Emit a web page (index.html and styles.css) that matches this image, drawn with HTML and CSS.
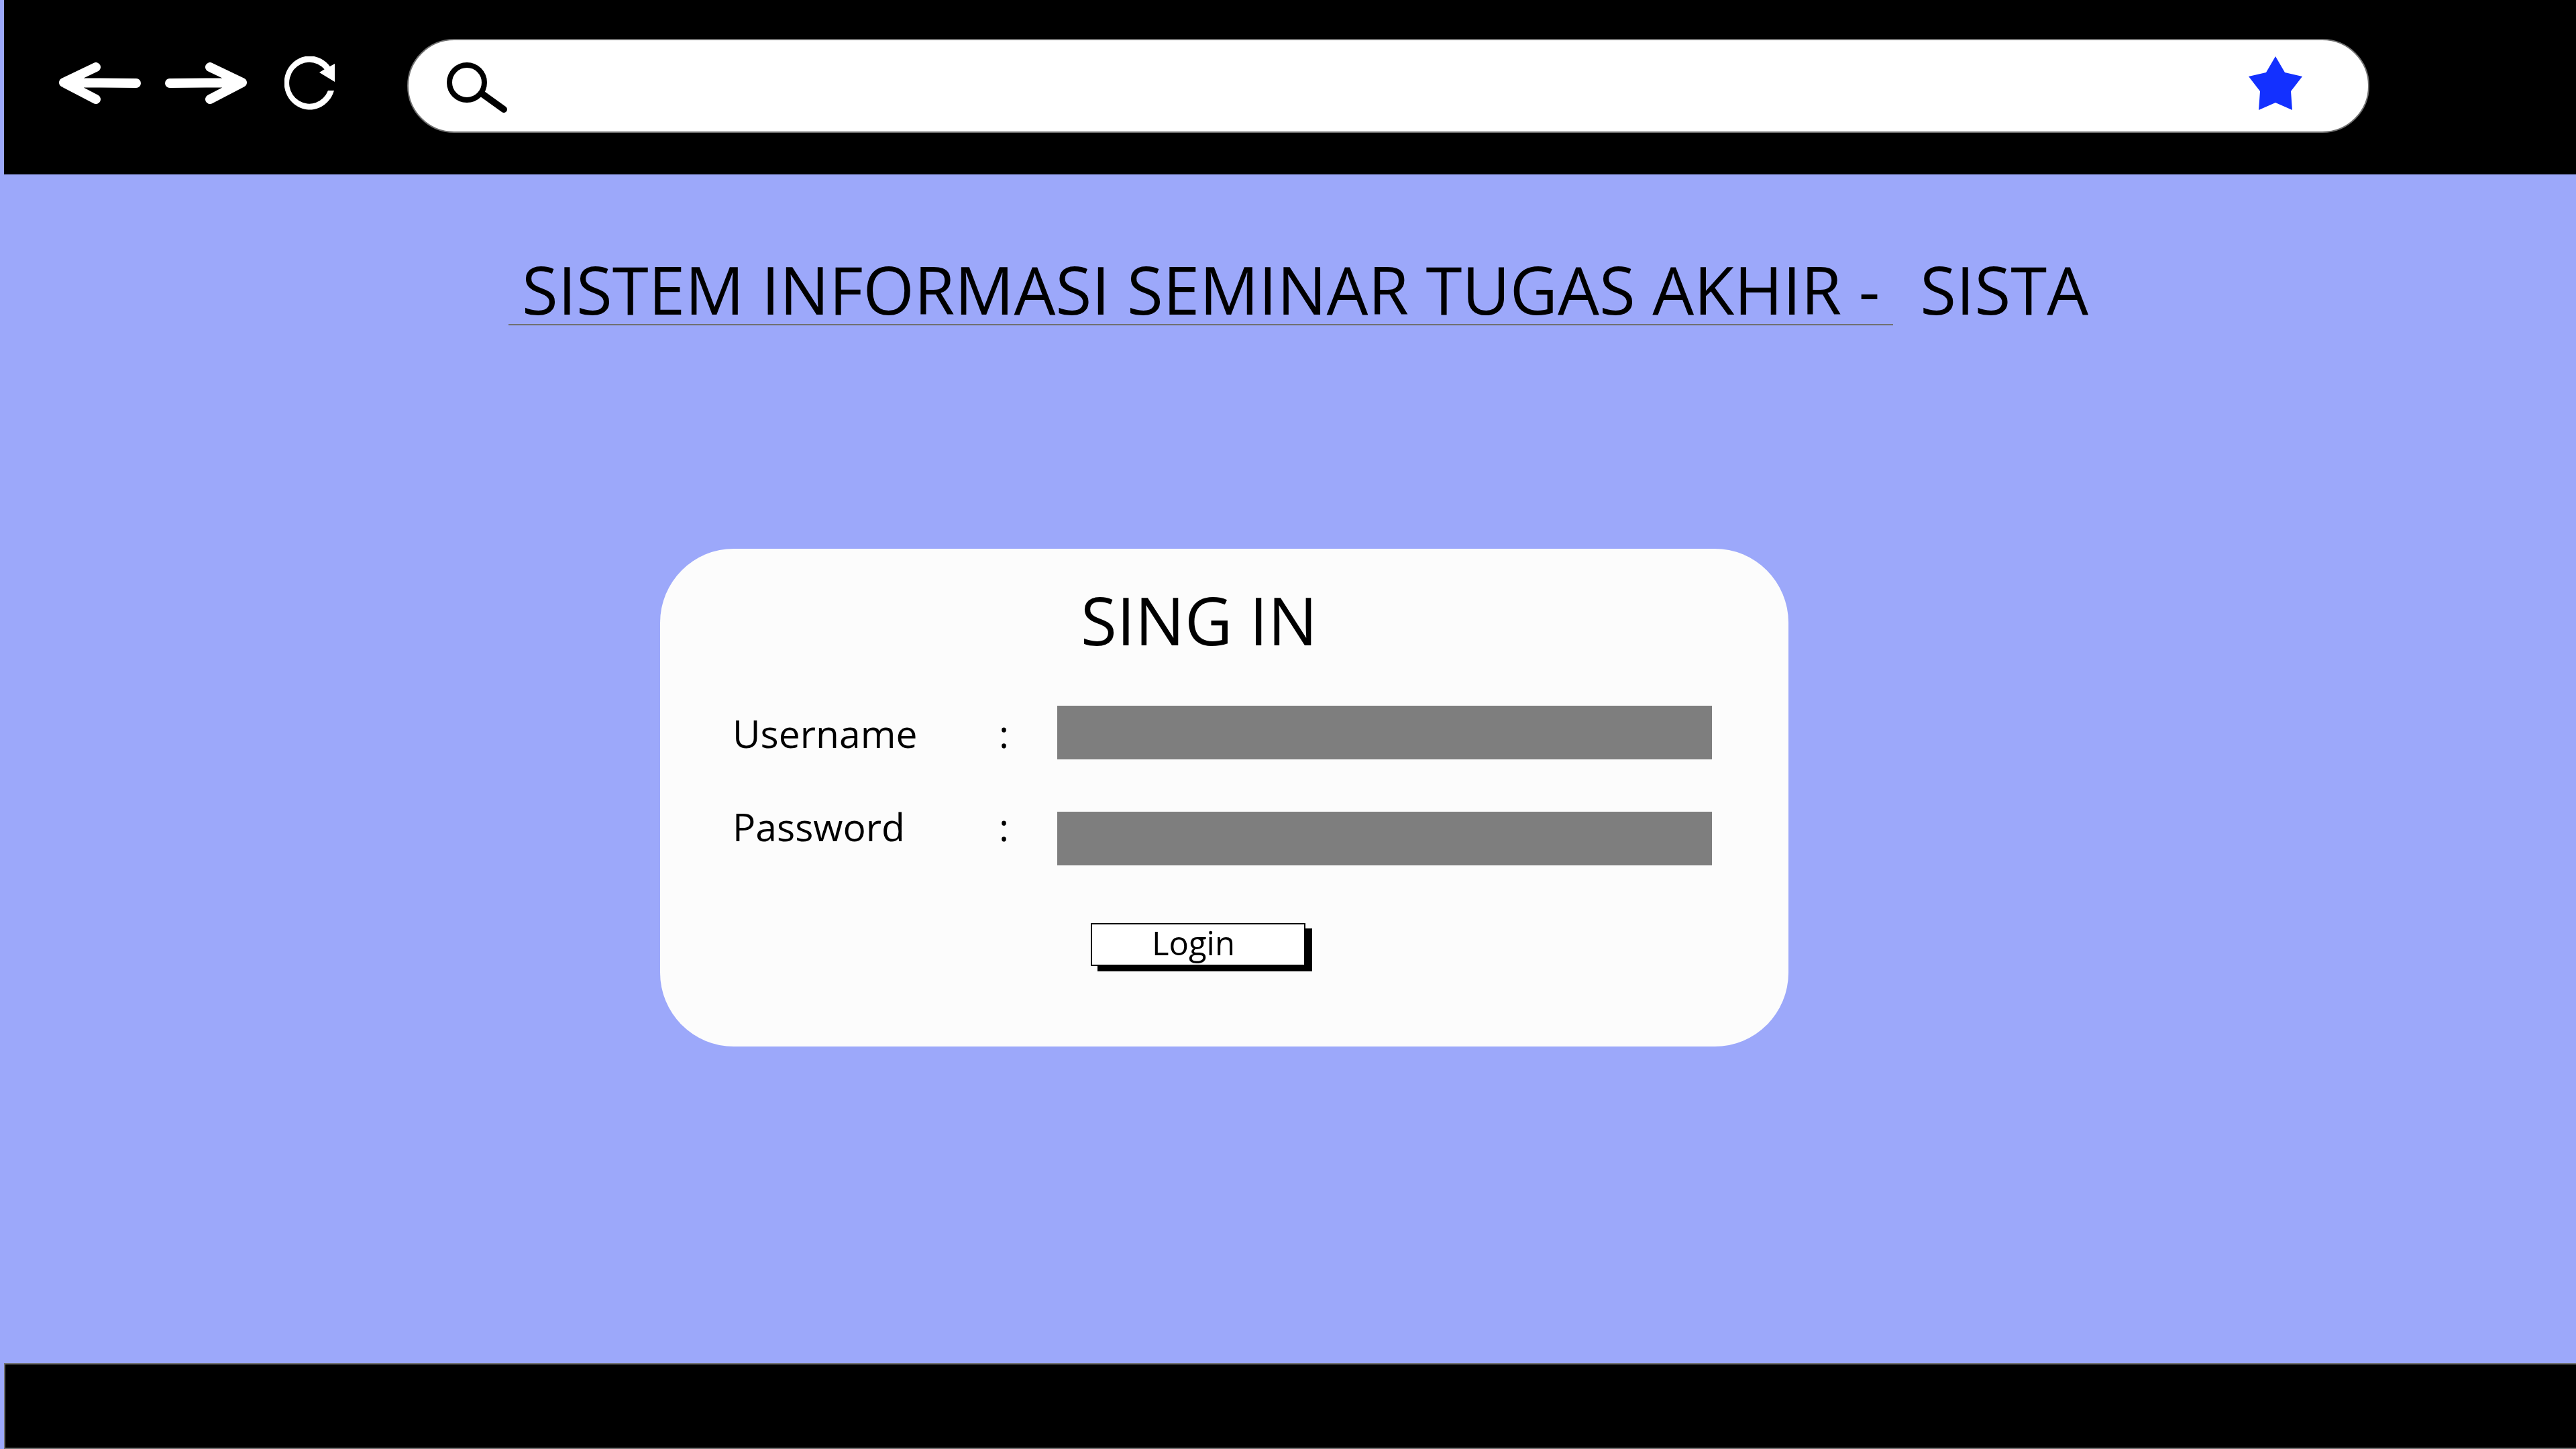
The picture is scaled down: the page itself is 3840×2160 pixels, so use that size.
FILE: index.html
```html
<!DOCTYPE html>
<html lang="id">
<head>
<meta charset="utf-8">
<meta name="viewport" content="width=device-width, initial-scale=1">
<title>SISTA</title>
<link rel="stylesheet" href="styles.css">
</head>
<body>
<header class="toolbar">
  <nav class="nav">
    <button class="icon-button" type="button" aria-label="Back">
      <svg width="122" height="62" viewBox="0 0 122 62" fill="none" stroke="#fff" stroke-width="14" stroke-linecap="round" stroke-linejoin="round"><path d="M55 7 7 30 55 55M7 30 115 31"/></svg>
    </button>
    <button class="icon-button" type="button" aria-label="Forward">
      <svg width="122" height="62" viewBox="0 0 122 62" fill="none" stroke="#fff" stroke-width="14" stroke-linecap="round" stroke-linejoin="round"><path d="M67 7 115 30 67 55M115 30 7 31"/></svg>
    </button>
    <button class="icon-button reload" type="button" aria-label="Reload">
      <svg width="76" height="80" viewBox="0 0 76 80"><path d="M74 51A38 40 0 1 1 67.700 15L75 11V38L52 24L59.700 19.300A30 31 0 1 0 65 51Z" fill="#fff"/></svg>
    </button>
  </nav>
  <form class="search" role="search">
    <svg width="92" height="78" viewBox="0 0 92 78" fill="none" stroke="#000"><circle cx="31" cy="31" r="26" stroke-width="8"/><path d="M54 48 86 71" stroke-width="10" stroke-linecap="round"/></svg>
    <input class="search-input" type="text" aria-label="Search">
    <button class="icon-button" type="button" aria-label="Bookmark">
      <svg width="80" height="80" viewBox="0 0 80 80"><path d="M40 0 54 24 80 30 63 52 65 80 40 69 15 80 17 52 0 30 26 24Z" fill="#1330ff"/></svg>
    </button>
  </form>
</header>
<main class="page">
  <h1 class="title"><span class="title-main">SISTEM INFORMASI SEMINAR TUGAS AKHIR -</span><span>SISTA</span></h1>
  <form class="card">
    <h2 class="card-title">SING IN</h2>
    <div class="fields">
      <label class="label" for="username">Username</label><span class="label">:</span>
      <input class="field" id="username" type="text">
      <label class="label label-raised" for="password">Password</label><span class="label label-raised">:</span>
      <input class="field" id="password" type="password">
    </div>
    <button class="login" type="submit">Login</button>
  </form>
</main>
<footer class="footer"></footer>
</body>
</html>
```
FILE: styles.css
```css
* { box-sizing: border-box; }

body {
  margin: 0;
  min-height: 100vh;
  display: flex;
  flex-direction: column;
  background: #9ca8fa;
  color: #000;
  font-family: "Open Sans", "Noto Sans", sans-serif;
  overflow-x: hidden;
}

svg { display: block; flex: none; }

.toolbar {
  display: flex;
  margin-left: 6px;
  padding: 58px 308px 62px 82px;
  background: #000;
}

.nav {
  display: flex;
  align-items: center;
  gap: 36px;
  padding: 0 107px 8px 0;
}

.icon-button {
  padding: 0;
  border: 0;
  background: none;
}

.reload { margin-left: 20px; }

.search {
  flex: 1;
  display: flex;
  align-items: flex-end;
  padding: 24px 98px 26px 56px;
  border: 2px solid #707070;
  border-radius: 70px;
  background: #fff;
}

.search .icon-button { align-self: flex-start; }

.search-input {
  flex: 1;
  min-width: 0;
  height: 86px;
  border: 0;
  background: none;
  font: inherit;
  font-size: 49px;
  outline: none;
}

.page {
  flex: 1;
  padding: 119px 0 0 758px;
}

.title {
  display: flex;
  gap: 40px;
  margin: 0;
  font-size: 98px;
  font-weight: 400;
  line-height: 104px;
  white-space: nowrap;
}

.title-main {
  padding: 0 20px;
  border-bottom: 2px solid #707070;
}

.card {
  width: 1682px;
  margin: 333px 0 0 226px;
  padding: 38px 114px 120px 108px;
  border-radius: 110px;
  background: #fcfcfc;
}

.card-title {
  margin: 0 0 60px 519px;
  font-size: 98px;
  font-weight: 400;
  line-height: 136px;
}

.fields {
  display: grid;
  grid-template-columns: 397px 87px 1fr;
  align-items: start;
  row-gap: 76px;
}

.label {
  font-size: 57px;
  line-height: 82px;
}

.label-raised { line-height: 44px; }

.field {
  width: 100%;
  height: 80px;
  padding: 0 16px;
  border: 0;
  background: #7e7e7e;
  font: inherit;
  font-size: 49px;
}

.login {
  display: block;
  width: 320px;
  height: 64px;
  margin: 86px 0 0 534px;
  padding: 0 14px 6px 0;
  border: 2px solid #000;
  background: #fff;
  box-shadow: 10px 8px 0 #000;
  color: #000;
  font: inherit;
  font-size: 49px;
  line-height: 54px;
}

.footer {
  height: 128px;
  margin-left: 6px;
  border: 2px solid #707070;
  border-right: 0;
  background: #000;
}
```
